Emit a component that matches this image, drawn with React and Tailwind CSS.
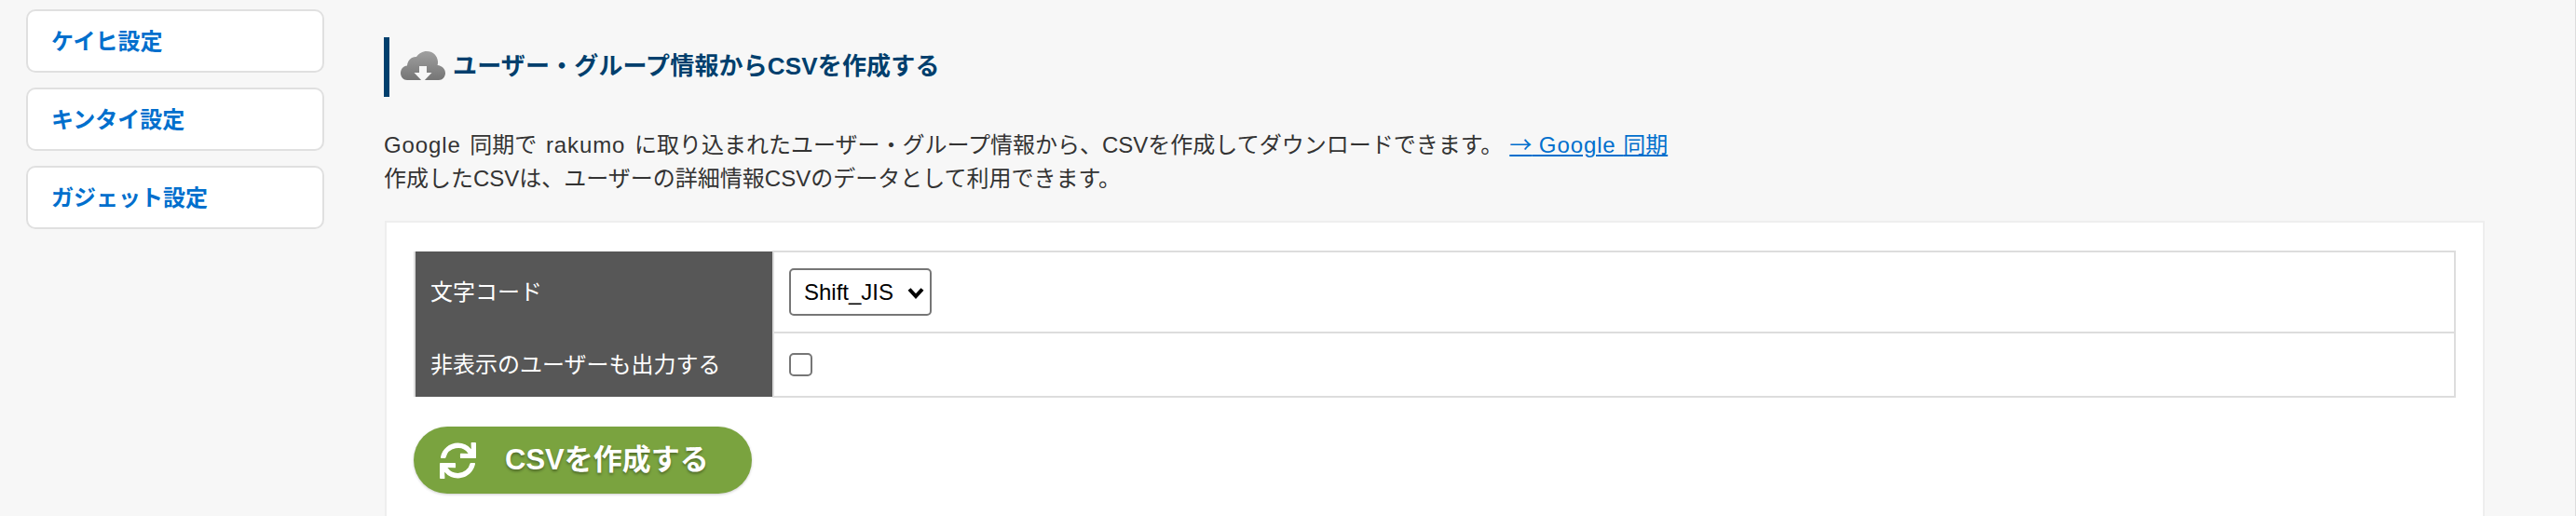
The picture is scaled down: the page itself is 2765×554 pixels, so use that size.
import { FaSync } from 'react-icons/fa';

const FONT = "font-['Liberation_Sans','Noto_Sans_CJK_JP',sans-serif]";

const sideLinks = ['ケイヒ設定', 'キンタイ設定', 'ガジェット設定'];

function CloudIcon() {
  return (
    <svg
      width="48"
      height="33"
      viewBox="0 0 48 33"
      className="shrink-0 blur-[0.5px]"
    >
      <defs>
        <linearGradient id="cloud" x1="0" y1="0" x2="0" y2="1">
          <stop offset="0" stopColor="#a0a0a0" />
          <stop offset="1" stopColor="#757575" />
        </linearGradient>
      </defs>
      <path
        fill="url(#cloud)"
        d="M7 31C3 31 0 27.500 0 23.500C0 19 3 16 7 15.500C7.500 9.500 12 5.500 17 6C19.500 2.500 23.500 0 28 0C34.500 0 39.500 4.500 40 11C40 13 40 14 39.500 15C44.500 15.500 48 19 48 23.500C48 27.500 45 31 41 31Z"
      />
      <path fill="#f7f7f7" d="M20 16H28V23H33.500L24 33L14.500 23H20Z" />
    </svg>
  );
}

function SideLink({ label }) {
  return (
    <a className="flex h-[68px] w-[320px] items-center rounded-[10px] border-2 border-[#e0e0e0] bg-white pl-[25px] pt-[2px] text-[24px] font-bold text-[#006fcd]">
      {label}
    </a>
  );
}

export default function App() {
  return (
    <div
      className={`flex h-[554px] overflow-hidden border-r border-[#dddddd] bg-[#f7f7f7] text-[#333333] ${FONT}`}
    >
      {/* Sidebar */}
      <nav className="flex w-[412px] shrink-0 flex-col gap-4 pl-[28px] pt-[10px]">
        {sideLinks.map((label) => (
          <SideLink key={label} label={label} />
        ))}
      </nav>

      {/* Main */}
      <main className="w-[2255px] shrink-0 pt-10">
        <h2 className="flex h-16 items-center gap-[8px] border-l-[6px] border-[#003f6d] pb-[2px] pl-3 text-[26px] font-bold tracking-[0.15px] text-[#003f6d]">
          <CloudIcon />
          ユーザー・グループ情報からCSVを作成する
        </h2>

        <p className="mt-[32px] text-[24px] leading-[36px]">
          <span className="tracking-[0.9px] [word-spacing:2px]">Google </span>
          同期で
          <span className="tracking-[0.9px] [word-spacing:2px]"> rakumo </span>
          に取り込まれたユーザー・グループ情報から、CSVを作成してダウンロードできます。
          <a className="ml-[7px] text-[#006fcd] underline">
            <span className="font-['Noto_Sans_CJK_JP',sans-serif]">→</span>
            <span className="tracking-[0.9px]"> Google </span>
            同期
          </a>
          <br />
          作成したCSVは、ユーザーの詳細情報CSVのデータとして利用できます。
        </p>

        {/* Card */}
        <section className="ml-px mt-[27px] h-[400px] border-2 border-[#eeeeee] bg-white pl-[29px] pr-[29px] pt-[30px]">
          <table className="w-full border-collapse text-[24px]">
            <tbody>
              <tr className="h-[87px]">
                <th className="w-[385px] border-l-2 border-[#dddddd] bg-[#575757] pl-[16px] text-left font-normal text-white">
                  文字コード
                </th>
                <td className="border-2 border-[#dddddd] pl-[16px]">
                  <div className="relative w-[153px]">
                    <select className="block h-[51px] w-[153px] appearance-none rounded-[5px] border-2 border-[#767676] bg-white pl-[14px] text-[24px] text-black">
                      <option>Shift_JIS</option>
                    </select>
                    <svg
                      width="18"
                      height="13"
                      viewBox="0 0 18 13"
                      className="pointer-events-none absolute right-[8px] top-[20px]"
                    >
                      <path d="M2 2.500L9 10L16 2.500" fill="none" stroke="#000000" strokeWidth="4" />
                    </svg>
                  </div>
                </td>
              </tr>
              <tr className="h-[69px]">
                <th className="border-l-2 border-[#dddddd] bg-[#575757] pl-[16px] text-left font-normal text-white">
                  非表示のユーザーも出力する
                </th>
                <td className="border-2 border-[#dddddd] pl-[16px]">
                  <input
                    type="checkbox"
                    className="block h-[25px] w-[25px] appearance-none rounded-[5px] border-2 border-[#767676] bg-white"
                  />
                </td>
              </tr>
            </tbody>
          </table>

          <button className="mt-[31px] flex h-[72px] w-[363px] items-center rounded-full bg-[#7aa33f] pl-[28px] text-[31px] font-bold text-white shadow-[0_1px_3px_rgba(0,0,0,0.2)] [text-shadow:0_2px_3px_rgba(0,0,0,0.35)]">
            <FaSync className="h-[39px] w-[39px] shrink-0 blur-[0.4px]" />
            <span className="ml-[31px]">CSVを作成する</span>
          </button>
        </section>
      </main>
    </div>
  );
}
